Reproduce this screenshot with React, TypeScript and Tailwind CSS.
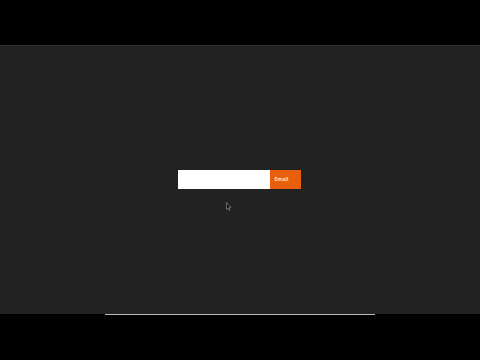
import React from 'react';

const App: React.FC = () => {
  return (
    <div className="flex h-[360px] w-[480px] flex-col bg-black" style={{ fontFamily: '"Open Sans", "Liberation Sans", sans-serif' }}>
      {/* letterbox top */}
      <div className="h-[45px] shrink-0 bg-black" />

      {/* video area */}
      <div className="flex h-[269px] shrink-0 flex-col items-center border-t border-[#2c2c2c] bg-[#222222]">
        <div className="h-[124px]" />
        <form className="mr-[2px] flex h-[19px] items-stretch" onSubmit={(e) => e.preventDefault()}>
          <input className="w-[92px] bg-white outline-none" />
          <button className="flex w-[31px] items-center bg-[#e8600e] pl-[5px] text-[5px] font-bold text-[#fde3cf]">
            Email
          </button>
        </form>
        <div className="ml-[-22px] mt-[13px]">
          <svg width="6" height="9" viewBox="0 0 6 9">
            <path d="M0.5 0.5 L0.5 7.5 L2 6 L3.2 8.5 L4 8.1 L2.9 5.7 L5 5.7 Z" fill="#111" stroke="#9a9a9a" strokeWidth="0.6" />
          </svg>
        </div>
      </div>

      {/* progress line + bottom letterbox */}
      <div className="flex flex-1 flex-col items-center bg-black">
        <div className="h-px w-[270px] bg-[#bdbdbd]" />
      </div>
    </div>
  );
};

export default App;
